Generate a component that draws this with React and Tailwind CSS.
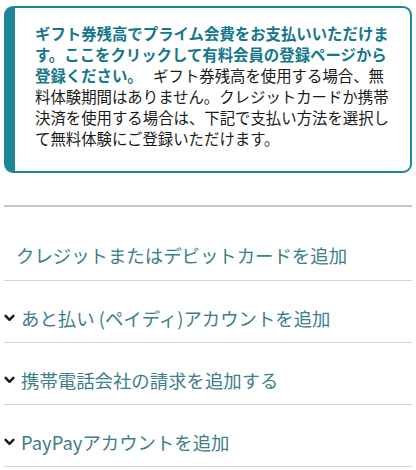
import React from "react";

const Chevron = () => (
    <svg
        width="11"
        height="8"
        viewBox="0 0 11 8"
        className="shrink-0 mr-[6px]"
        fill="none"
        stroke="#1a1a1a"
        strokeWidth="2.4"
        strokeLinecap="round"
        strokeLinejoin="round"
    >
        <path d="M1.6 1.8 L5.5 5.8 L9.4 1.8" />
    </svg>
);

const App = () => {
    const options = [
        "あと払い (ペイディ)アカウントを追加",
        "携帯電話会社の請求を追加する",
        "PayPayアカウントを追加",
    ];

    return (
        <div
            className="w-[416px] h-[470px] overflow-hidden bg-white px-[4px] pt-[6px]"
            style={{ fontFamily: '"Noto Sans CJK JP", "Noto Sans", sans-serif' }}
        >
            {/* info box */}
            <div className="h-[167px] rounded-[9px] border-2 border-l-[11px] border-[#1c8597] pl-[20px] pr-[16px] pt-[15px] pb-[17px]">
                <p className="text-[15.4px] leading-[21px] text-[#1a1a1a]">
                    <a href="#" className="font-bold text-[#13788b]">
                        ギフト券残高でプライム会費をお支払いいただけます。ここをクリックして有料会員の登録ページから登録ください。
                    </a>
                    {"\u00a0\u00a0 "}
                    ギフト券残高を使用する場合、無料体験期間はありません。クレジットカードか携帯決済を使用する場合は、下記で支払い方法を選択して無料体験にご登録いただけます。
                </p>
            </div>

            <div className="mt-[32px] border-t-2 border-[#c6c6c6]">
                <div className="border-b border-[#d4d4d4] pl-[12px] pt-[35px] pb-[12px]">
                    <a href="#" className="block text-[18.4px] leading-[26px] text-[#3d7f8a]">
                        クレジットまたはデビットカードを追加
                    </a>
                </div>
                {options.map((label, index) => (
                    <div
                        key={index}
                        className="flex items-center border-b border-[#d4d4d4] pt-[24px] pb-[11px]"
                    >
                        <Chevron />
                        <a href="#" className="text-[18.4px] leading-[26px] text-[#3d7f8a]">
                            {label}
                        </a>
                    </div>
                ))}
            </div>
        </div>
    );
};

export default App;
